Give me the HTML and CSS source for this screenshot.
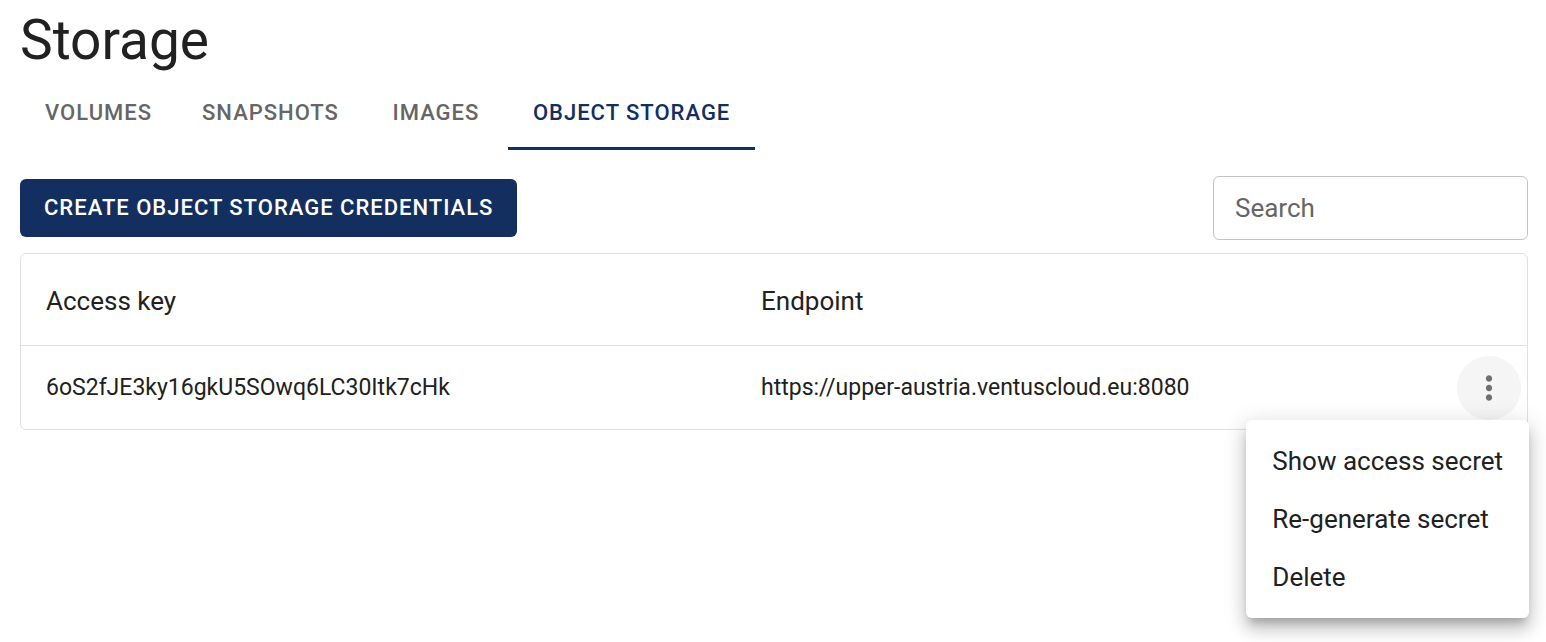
FILE: index.html
```html
<!DOCTYPE html>
<html lang="en">
<head>
<meta charset="utf-8">
<title>Storage</title>
<link rel="stylesheet" href="styles.css">
</head>
<body>
<main class="page">
  <h1 class="title">Storage</h1>
  <div class="tabs" role="tablist">
    <button class="tab" role="tab" aria-selected="false">Volumes</button>
    <button class="tab" role="tab" aria-selected="false">Snapshots</button>
    <button class="tab" role="tab" aria-selected="false">Images</button>
    <button class="tab tab-active" role="tab" aria-selected="true">Object storage</button>
  </div>
  <div class="toolbar">
    <button class="create">Create object storage credentials</button>
    <input class="search" type="text" placeholder="Search" aria-label="Search">
  </div>
  <div class="card">
    <table class="table">
      <thead>
        <tr><th class="col-key" scope="col">Access key</th><th scope="col">Endpoint</th><td class="col-action"></td></tr>
      </thead>
      <tbody>
        <tr>
          <td>6oS2fJE3ky16gkU5SOwq6LC30Itk7cHk</td>
          <td>https://upper-austria.ventuscloud.eu:8080</td>
          <td class="col-action">
            <div class="actions">
              <button class="more" aria-label="Actions" aria-haspopup="menu" aria-expanded="true">
                <svg class="more-icon" viewBox="0 0 24 24" aria-hidden="true"><path d="M12 8c1.1 0 2-.9 2-2s-.9-2-2-2-2 .9-2 2 .9 2 2 2zm0 2c-1.1 0-2 .9-2 2s.9 2 2 2 2-.9 2-2-.9-2-2-2zm0 6c-1.1 0-2 .9-2 2s.9 2 2 2 2-.9 2-2-.9-2-2-2z"/></svg>
              </button>
              <div class="menu" role="menu">
                <button class="menu-item" role="menuitem">Show access secret</button>
                <button class="menu-item" role="menuitem">Re-generate secret</button>
                <button class="menu-item" role="menuitem">Delete</button>
              </div>
            </div>
          </td>
        </tr>
      </tbody>
    </table>
  </div>
</main>
</body>
</html>
```
FILE: styles.css
```css
* {
  box-sizing: border-box;
}

body {
  margin: 0;
  background: #fff;
  color: #212121;
  font-family: Roboto, "Liberation Sans", sans-serif;
}

button,
input {
  font: inherit;
  color: inherit;
}

button {
  border: 0;
  background: none;
  cursor: pointer;
}

.page {
  min-height: 100vh;
  padding: 8px 18px 0 20px;
}

.title {
  margin: 0;
  font-size: 55px;
  font-weight: 400;
  line-height: 64px;
}

.tabs {
  display: flex;
}

.tab {
  min-width: 144px;
  height: 78px;
  padding: 3px 25px 0;
  border: solid transparent;
  border-width: 3px 0;
  color: #666;
  font-size: 22px;
  font-weight: 500;
  letter-spacing: 1px;
  text-transform: uppercase;
}

.tab-active {
  border-bottom-color: #122f60;
  color: #122f60;
}

.toolbar {
  display: flex;
  align-items: center;
  justify-content: space-between;
  margin: 26px 0 13px;
}

.create {
  height: 58px;
  padding: 0 24px 2px;
  border-radius: 6px;
  background: #122f60;
  color: #fff;
  font-size: 22px;
  font-weight: 500;
  letter-spacing: 1px;
  text-transform: uppercase;
}

.search {
  width: 315px;
  height: 64px;
  padding: 0 21px;
  border: 1px solid #c4c4c4;
  border-radius: 6px;
  font-size: 26px;
}

.search::placeholder {
  color: #666;
}

.card {
  border: 1px solid #e0e0e0;
  border-radius: 6px;
}

.table {
  width: 100%;
  border-collapse: separate;
  border-spacing: 0;
  table-layout: fixed;
  text-align: left;
}

.table th {
  height: 92px;
  padding: 2px 25px 0;
  border-bottom: 1px solid #e0e0e0;
  font-size: 26px;
  font-weight: 400;
}

.table thead td {
  border-bottom: 1px solid #e0e0e0;
}

.table tbody td {
  height: 83px;
  padding: 0 25px;
  font-size: 23px;
}

.table .col-key {
  width: 715px;
}

.table tbody .col-action,
.table .col-action {
  width: 77px;
  padding: 0 6px;
}

.actions {
  position: relative;
  display: flex;
  justify-content: flex-end;
}

.more {
  display: flex;
  align-items: center;
  justify-content: center;
  width: 64px;
  height: 64px;
  padding: 0;
  border-radius: 50%;
  background: #f5f5f5;
}

.more-icon {
  width: 38px;
  height: 38px;
  fill: #707070;
}

.menu {
  position: absolute;
  top: 100%;
  right: -8px;
  padding: 12px 0;
  border-radius: 6px;
  background: #fff;
  box-shadow: 0 8px 8px -4px rgba(0, 0, 0, 0.2), 0 12px 16px 1px rgba(0, 0, 0, 0.14), 0 4px 22px 3px rgba(0, 0, 0, 0.12);
}

.menu-item {
  display: block;
  width: 100%;
  height: 58px;
  padding: 0 26px;
  font-size: 26px;
  text-align: left;
  white-space: nowrap;
}
```
